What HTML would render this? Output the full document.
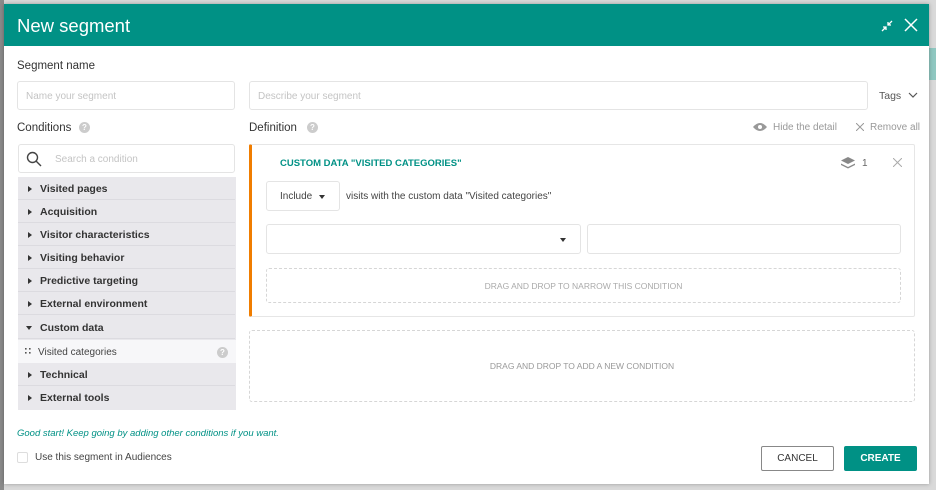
<!DOCTYPE html>
<html><head><style>
*{margin:0;padding:0;box-sizing:border-box}
body{width:936px;height:490px;overflow:hidden;background:#d9d9d9;font-family:"Liberation Sans",sans-serif;position:relative}
.a{position:absolute}
.t{position:absolute;white-space:nowrap}
.in{position:absolute;border:1px solid #e4e4e4;border-radius:3px;background:#fff}
.ph{color:#c4c4c4;font-size:10px}
.row{position:absolute;left:18px;width:217px;height:23px;border-bottom:1px solid #dcdbe0;font-size:10.5px;font-weight:bold;color:#333;line-height:24px}
.row span.tri{position:absolute;left:10px;top:9px;width:0;height:0;border-left:4px solid #333;border-top:3.5px solid transparent;border-bottom:3.5px solid transparent}
.row b{position:absolute;left:22px}
.q{position:absolute;width:11px;height:11px;border-radius:50%;background:#ccc;color:#fff;font-size:8px;font-weight:bold;text-align:center;line-height:11px}
</style></head><body>
<div class="a" style="left:0;top:0;width:4px;height:490px;background:#8a8a8a"></div>
<div class="a" style="left:929px;top:48px;width:7px;height:32px;background:#8fc7c0"></div>
<div class="a" style="left:4px;top:4px;width:925px;height:480px;background:#fff;box-shadow:0 0 4px rgba(0,0,0,.3)"></div>
<div class="a" style="left:4px;top:4px;width:925px;height:42px;background:#009185"></div>
<div class="t" style="left:17px;top:15px;color:#fff;font-size:18.5px">New segment</div>
<svg class="a" style="left:880px;top:19px" width="14" height="14" viewBox="0 0 14 14" stroke="#fff" stroke-width="1.3" fill="none"><path d="M2 12L6 8M3 8h3v3M12 2L8 6M8 3v3h3"/></svg>
<svg class="a" style="left:904px;top:18px" width="14" height="14" viewBox="0 0 14 14" stroke="#fff" stroke-width="1.5"><path d="M1 1L13 13M13 1L1 13"/></svg>

<div class="t" style="left:17px;top:60px;font-size:11.5px;color:#333">Segment name</div>
<div class="in" style="left:17px;top:81px;width:218px;height:29px"></div>
<div class="t ph" style="left:26px;top:91px">Name your segment</div>
<div class="in" style="left:249px;top:81px;width:619px;height:29px"></div>
<div class="t ph" style="left:258px;top:91px">Describe your segment</div>
<div class="t" style="left:879px;top:90px;font-size:10.5px;color:#555">Tags</div>
<svg class="a" style="left:908px;top:91px" width="10" height="8" viewBox="0 0 10 8" stroke="#555" stroke-width="1.2" fill="none"><path d="M1 2l4 4 4-4"/></svg>

<div class="t" style="left:17px;top:122px;font-size:11.5px;color:#333">Conditions</div>
<div class="q" style="left:79px;top:122px">?</div>
<div class="t" style="left:249px;top:122px;font-size:11.5px;color:#333">Definition</div>
<div class="q" style="left:307px;top:122px">?</div>
<svg class="a" style="left:753px;top:122px" width="14" height="10" viewBox="0 0 14 10"><path d="M0 5Q7-3 14 5Q7 13 0 5Z" fill="#999"/><circle cx="7" cy="5" r="2" fill="#fff"/></svg>
<div class="t" style="left:773px;top:122px;font-size:10px;color:#999">Hide the detail</div>
<svg class="a" style="left:856px;top:123px" width="8" height="8" viewBox="0 0 8 8" stroke="#999"><path d="M0 0L8 8M8 0L0 8"/></svg>
<div class="t" style="left:870px;top:122px;font-size:10px;color:#999">Remove all</div>

<div class="in" style="left:18px;top:144px;width:217px;height:29px"></div>
<svg class="a" style="left:26px;top:151px" width="16" height="16" viewBox="0 0 16 16" stroke="#444" stroke-width="1.4" fill="none"><circle cx="6.5" cy="6.5" r="5"/><path d="M10 10l5 5"/></svg>
<div class="t ph" style="left:55px;top:154px">Search a condition</div>
<div class="a" style="left:18px;top:177px;width:218px;height:233px;background:#e9e8ec"></div>
<div class="row" style="top:177px"><span class="tri"></span><b>Visited pages</b></div>
<div class="row" style="top:200px"><span class="tri"></span><b>Acquisition</b></div>
<div class="row" style="top:223px"><span class="tri"></span><b>Visitor characteristics</b></div>
<div class="row" style="top:246px"><span class="tri"></span><b>Visiting behavior</b></div>
<div class="row" style="top:269px"><span class="tri"></span><b>Predictive targeting</b></div>
<div class="row" style="top:292px"><span class="tri"></span><b>External environment</b></div>
<div class="row" style="top:316px"><span style="position:absolute;left:8px;top:10px;border-top:4px solid #333;border-left:3.5px solid transparent;border-right:3.5px solid transparent"></span><b>Custom data</b></div>
<div class="a" style="left:18px;top:340px;width:218px;height:23px;background:#f7f7f9"></div>
<svg class="a" style="left:25px;top:348px" width="6" height="6" viewBox="0 0 6 6" fill="#555"><rect x="0" y="0" width="1.6" height="1.6"/><rect x="4" y="0" width="1.6" height="1.6"/><rect x="0" y="4" width="1.6" height="1.6"/><rect x="4" y="4" width="1.6" height="1.6"/></svg>
<div class="t" style="left:38px;top:347px;font-size:10px;color:#444">Visited categories</div>
<div class="q" style="left:217px;top:347px">?</div>
<div class="row" style="top:363px"><span class="tri"></span><b>Technical</b></div>
<div class="row" style="top:386px;border-bottom:none"><span class="tri"></span><b>External tools</b></div>

<div class="a" style="left:249px;top:144px;width:666px;height:173px;border:1px solid #e6e6e6;border-left:3px solid #f07d00;border-radius:2px"></div>
<div class="t" style="left:280px;top:158px;font-size:9.5px;font-weight:bold;color:#009185">CUSTOM DATA "VISITED CATEGORIES"</div>
<svg class="a" style="left:841px;top:157px" width="14" height="12" viewBox="0 0 14 12" fill="#888"><path d="M7 0L14 3.5L7 7L0 3.5Z"/><path d="M0 6.5L7 10L14 6.5L14 8L7 11.5L0 8Z"/></svg>
<div class="t" style="left:862px;top:158px;font-size:10px;color:#666">1</div>
<svg class="a" style="left:893px;top:158px" width="9" height="9" viewBox="0 0 9 9" stroke="#aaa"><path d="M0 0L9 9M9 0L0 9"/></svg>
<div class="in" style="left:266px;top:181px;width:74px;height:30px"></div>
<div class="t" style="left:280px;top:191px;font-size:10px;color:#444">Include</div>
<div class="a" style="left:319px;top:195px;border-top:4px solid #333;border-left:3.5px solid transparent;border-right:3.5px solid transparent"></div>
<div class="t" style="left:346px;top:191px;font-size:10px;color:#444">visits with the custom data "Visited categories"</div>
<div class="in" style="left:266px;top:224px;width:315px;height:30px"></div>
<div class="a" style="left:560px;top:238px;border-top:4px solid #333;border-left:3.5px solid transparent;border-right:3.5px solid transparent"></div>
<div class="in" style="left:587px;top:224px;width:314px;height:30px"></div>
<div class="a" style="left:266px;top:268px;width:635px;height:35px;border:1px dashed #d6d6d6;border-radius:3px;text-align:center;line-height:34px;font-size:8.5px;color:#aaa">DRAG AND DROP TO NARROW THIS CONDITION</div>
<div class="a" style="left:249px;top:330px;width:666px;height:72px;border:1px dashed #d6d6d6;border-radius:3px;text-align:center;line-height:71px;font-size:8.5px;color:#999">DRAG AND DROP TO ADD A NEW CONDITION</div>

<div class="t" style="left:17px;top:428px;font-size:9.5px;font-style:italic;color:#009185">Good start! Keep going by adding other conditions if you want.</div>
<div class="a" style="left:17px;top:452px;width:11px;height:11px;border:1px solid #ddd;border-radius:2px"></div>
<div class="t" style="left:35px;top:452px;font-size:10px;color:#444">Use this segment in Audiences</div>
<div class="a" style="left:761px;top:446px;width:73px;height:25px;border:1px solid #888;border-radius:2px;text-align:center;line-height:24px;font-size:10px;color:#333">CANCEL</div>
<div class="a" style="left:844px;top:446px;width:73px;height:25px;background:#009185;border-radius:2px;text-align:center;line-height:25px;font-size:10px;font-weight:bold;color:#fff">CREATE</div>
</body></html>
